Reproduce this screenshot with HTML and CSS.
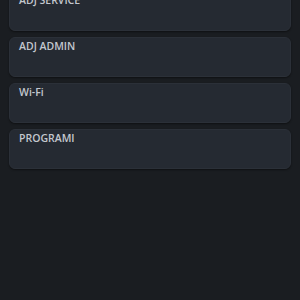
FILE: index.html
```html
<!DOCTYPE html>
<html>
<head>
<meta charset="utf-8">
<link rel="stylesheet" href="styles.css">
</head>
<body>
<div class="list">
  <div class="card"><span class="label">ADJ SERVICE</span></div>
  <div class="card"><span class="label">ADJ ADMIN</span></div>
  <div class="card"><span class="label">Wi-Fi</span></div>
  <div class="card"><span class="label">PROGRAMI</span></div>
</div>
</body>
</html>
```
FILE: styles.css
```css
html, body {
  margin: 0;
  padding: 0;
  background: #1a1d21;
  height: 100%;
  overflow: hidden;
}
.list {
  display: flex;
  flex-direction: column;
  gap: 6px;
  padding: 0 9px;
  margin-top: -9px;
}
.card {
  height: 40px;
  box-sizing: border-box;
  background: #252a32;
  border: 1px solid #2b3038;
  border-radius: 6px;
  padding: 2px 9px;
  box-shadow: 0 1px 2px rgba(0,0,0,0.45);
}
.label {
  font-family: "Open Sans", "Noto Sans", sans-serif;
  font-weight: 600;
  font-size: 10.5px;
  line-height: 13px;
  color: #c3c7ce;
  display: block;
}
```
